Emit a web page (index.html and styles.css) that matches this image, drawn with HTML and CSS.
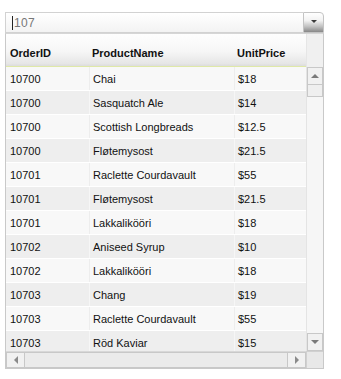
FILE: index.html
```html
<!DOCTYPE html>
<html>
<head>
<meta charset="utf-8">
<link rel="stylesheet" href="styles.css">
</head>
<body>
<div class="widget">
  <div class="combo">
    <div class="input"><span class="caret"></span><span class="value">107</span></div>
    <div class="drop-btn"><span class="tri-down dark"></span></div>
  </div>
  <div class="panel">
    <div class="header">
      <div class="hcell c1">OrderID</div>
      <div class="hcell c2">ProductName</div>
      <div class="hcell c3">UnitPrice</div>
    </div>
    <div class="hfill"></div>
    <div class="body">
      <div class="row"><div class="cell c1">10700</div><div class="cell c2">Chai</div><div class="cell c3">$18</div></div>
      <div class="row alt"><div class="cell c1">10700</div><div class="cell c2">Sasquatch Ale</div><div class="cell c3">$14</div></div>
      <div class="row"><div class="cell c1">10700</div><div class="cell c2">Scottish Longbreads</div><div class="cell c3">$12.5</div></div>
      <div class="row alt"><div class="cell c1">10700</div><div class="cell c2">Fløtemysost</div><div class="cell c3">$21.5</div></div>
      <div class="row"><div class="cell c1">10701</div><div class="cell c2">Raclette Courdavault</div><div class="cell c3">$55</div></div>
      <div class="row alt"><div class="cell c1">10701</div><div class="cell c2">Fløtemysost</div><div class="cell c3">$21.5</div></div>
      <div class="row"><div class="cell c1">10701</div><div class="cell c2">Lakkalikööri</div><div class="cell c3">$18</div></div>
      <div class="row alt"><div class="cell c1">10702</div><div class="cell c2">Aniseed Syrup</div><div class="cell c3">$10</div></div>
      <div class="row"><div class="cell c1">10702</div><div class="cell c2">Lakkalikööri</div><div class="cell c3">$18</div></div>
      <div class="row alt"><div class="cell c1">10703</div><div class="cell c2">Chang</div><div class="cell c3">$19</div></div>
      <div class="row"><div class="cell c1">10703</div><div class="cell c2">Raclette Courdavault</div><div class="cell c3">$55</div></div>
      <div class="row alt"><div class="cell c1">10703</div><div class="cell c2">Röd Kaviar</div><div class="cell c3">$15</div></div>
    </div>
    <div class="vscroll">
      <div class="sbtn vbtn"><span class="tri-up"></span></div>
      <div class="vthumb"></div>
      <div class="vtrack"></div>
      <div class="sbtn vbtn"><span class="tri-down"></span></div>
    </div>
    <div class="hscroll">
      <div class="sbtn hbtn"><span class="tri-left"></span></div>
      <div class="hthumb"></div>
      <div class="sbtn hbtn"><span class="tri-right"></span></div>
    </div>
    <div class="corner"></div>
  </div>
</div>
</body>
</html>
```

FILE: styles.css
```css
html, body {
  margin: 0;
  padding: 0;
  background: #ffffff;
}
body {
  font-family: "Liberation Sans", Arial, sans-serif;
  font-size: 11px;
  color: #111;
}
.widget {
  padding: 12px 0 0 5px;
  width: 319px;
}
.combo {
  display: flex;
  height: 21px;
}
.input {
  flex: 1;
  box-sizing: border-box;
  height: 21px;
  border: 1px solid #d2d2d2;
  border-right: none;
  background: linear-gradient(#ffffff, #f3f3f3);
  display: flex;
  align-items: center;
  padding-left: 6px;
  font-size: 12px;
  color: #777;
}
.caret {
  width: 1px;
  height: 14px;
  background: #222;
  margin-right: 1px;
}
.value {
  letter-spacing: 0.3px;
}
.drop-btn {
  box-sizing: border-box;
  width: 21px;
  height: 21px;
  border: 1px solid #c4c4c4;
  border-top-right-radius: 4px;
  background: linear-gradient(#ffffff 0%, #f2f2f2 40%, #c0c0c0 72%, #888888 100%);
  display: flex;
  align-items: center;
  justify-content: center;
  padding-bottom: 3px;
}
.tri-down {
  width: 0;
  height: 0;
  border-left: 4px solid transparent;
  border-right: 4px solid transparent;
  border-top: 4px solid #7a7a7a;
}
.tri-down.dark {
  border-top-color: #3a3a3a;
  border-left-width: 3px;
  border-right-width: 3px;
  border-top-width: 3px;
}
.tri-up {
  width: 0;
  height: 0;
  border-left: 4px solid transparent;
  border-right: 4px solid transparent;
  border-bottom: 4px solid #7a7a7a;
}
.tri-left {
  width: 0;
  height: 0;
  border-top: 4px solid transparent;
  border-bottom: 4px solid transparent;
  border-right: 4px solid #8a8a8a;
}
.tri-right {
  width: 0;
  height: 0;
  border-top: 4px solid transparent;
  border-bottom: 4px solid transparent;
  border-left: 4px solid #8a8a8a;
}
.panel {
  box-sizing: border-box;
  width: 319px;
  border: 1px solid #c9c9c9;
  border-top: 1px solid #d6d6d6;
  display: grid;
  grid-template-columns: 300px 17px;
  grid-template-rows: 33px 284px 17px;
  background: #fff;
}
.header {
  display: flex;
  background: linear-gradient(#fefefe 0%, #f6f6f6 55%, #e6e6e6 92%, #dcdcdc 100%);
  border-bottom: 1px solid #dfe8a8;
  box-sizing: border-box;
  height: 33px;
}
.hcell {
  font-weight: bold;
  font-size: 11px;
  color: #111;
  display: flex;
  align-items: center;
  padding-top: 5px;
  box-sizing: border-box;
}
.c1 { width: 83px; padding-left: 4px; }
.c2 { width: 145px; padding-left: 3px; }
.c3 { width: 72px; padding-left: 3px; }
.hfill {
  background: #f0f0f0;
  border-left: 1px solid #e6e6e6;
}
.body {
  overflow: hidden;
  background: #f2f2f2;
}
.row {
  display: flex;
  height: 24px;
  box-sizing: border-box;
  border-bottom: 1px solid #ffffff;
  background: #f8f8f8;
}
.row.alt {
  background: #eeeeee;
}
.cell {
  box-sizing: border-box;
  display: flex;
  align-items: center;
  padding-top: 1px;
  font-size: 11px;
  color: #111;
  white-space: nowrap;
  overflow: hidden;
}
.cell.c2, .cell.c3 {
  border-left: 1px solid #ededed;
}
.row.alt .cell.c2, .row.alt .cell.c3 {
  border-left-color: #f6f6f6;
}
.vscroll {
  display: flex;
  flex-direction: column;
  background: #f6f6f6;
  border-left: 1px solid #e4e4e4;
}
.sbtn {
  box-sizing: border-box;
  background: #f1f1f1;
  border: 1px solid #c8c8c8;
  display: flex;
  align-items: center;
  justify-content: center;
}
.vbtn {
  height: 18px;
}
.vthumb {
  height: 12px;
  box-sizing: border-box;
  background: #efefef;
  border: 1px solid #c8c8c8;
  border-top: none;
}
.vtrack {
  flex: 1;
  background: #f6f6f6;
}
.hscroll {
  display: flex;
  background: #f2f2f2;
  border-top: 1px solid #d8d8d8;
}
.hbtn {
  width: 19px;
}
.hthumb {
  flex: 1;
  box-sizing: border-box;
  background: #ebebeb;
  border: 1px solid #c8c8c8;
  border-left: none;
  border-right: none;
}
.corner {
  background: #e8e8e8;
  border-left: 1px solid #d0d0d0;
  border-top: 1px solid #d0d0d0;
}
```
